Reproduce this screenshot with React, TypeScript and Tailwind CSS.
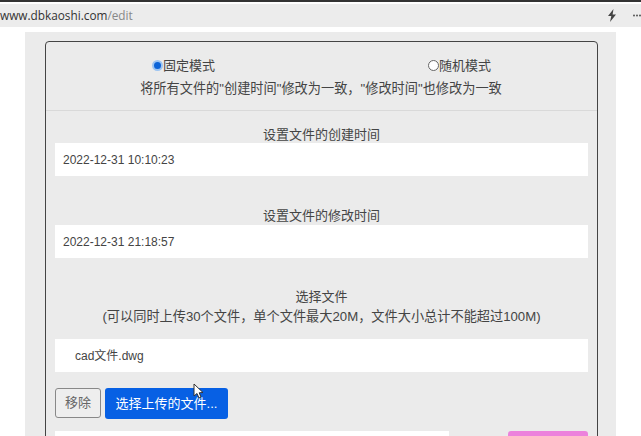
function Field({ value, indent }: { value: string; indent?: boolean }) {
  return (
    <div className={`h-[33px] bg-white flex items-center text-[12px] text-[#444] ${indent ? 'pl-[20px]' : 'pl-[8px]'}`}>
      {value}
    </div>
  );
}

function Radio({ on }: { on?: boolean }) {
  return on ? (
    <span className="w-[11px] h-[11px] rounded-full bg-[#0b63d8] border-[2px] border-[#9cc4f2] shrink-0" />
  ) : (
    <span className="w-[11px] h-[11px] rounded-full bg-white border border-[#666] shrink-0" />
  );
}

export default function App() {
  return (
    <div className="w-[641px] h-[436px] overflow-hidden bg-white font-['Liberation_Sans','Noto_Sans_CJK_SC',sans-serif] text-[#444]">
      <div className="h-[2px] bg-[#333]" />
      <div className="mt-[2px] h-[23px] bg-[#ececec] flex items-center justify-between">
        <div className="text-[11.8px] font-['Open_Sans',sans-serif]">
          <span className="text-[#333]">www.dbkaoshi.com</span>
          <span className="text-[#888]">/edit</span>
        </div>
        <div className="flex items-center gap-[16px]">
          <svg width="10" height="13" viewBox="0 0 10 13">
            <path d="M6.5 0 L1 7 L4.3 7 L3 13 L9 5.5 L5.6 5.5 Z" fill="#444" />
          </svg>
          <svg width="8" height="3" viewBox="0 0 8 3">
            <circle cx="1" cy="1.5" r="1" fill="#555" />
            <circle cx="4" cy="1.5" r="1" fill="#555" />
            <circle cx="7" cy="1.5" r="1" fill="#555" />
          </svg>
        </div>
      </div>

      <div className="mt-[5px] ml-[25px] w-[591px] h-[404px] bg-[#ebebeb] pt-[9px] pl-[20px]">
        <div className="w-[553px] h-[420px] border border-[#444] rounded-[4px]">
          <div className="h-[69px] border-b border-[#d9d9d9] text-[13px]">
            <div className="flex pt-[15px] h-[32px]">
              <div className="ml-[106px] flex items-center">
                <Radio on />
                <span>固定模式</span>
              </div>
              <div className="ml-[213px] flex items-center">
                <Radio />
                <span>随机模式</span>
              </div>
            </div>
            <p className="text-center mt-[7px] leading-[16px] text-[13.2px] pr-[1px]">将所有文件的"创建时间"修改为一致，"修改时间"也修改为一致</p>
          </div>

          <div className="px-[9px] text-[13px]">
            <p className="text-center leading-[16px] mt-[16px]">设置文件的创建时间</p>
            <Field value="2022-12-31 10:10:23" />
            <p className="text-center leading-[16px] mt-[32px] mb-[1px]">设置文件的修改时间</p>
            <Field value="2022-12-31 21:18:57" />
            <p className="text-center leading-[20px] mt-[29px]">选择文件</p>
            <p className="text-center leading-[20px] mb-[12px] text-[13.2px]">(可以同时上传30个文件，单个文件最大20M，文件大小总计不能超过100M)</p>
            <Field value="cad文件.dwg" indent />
            <div className="flex gap-[4px] mt-[16px]">
              <button className="w-[46px] h-[30px] rounded-[3px] border border-[#888] bg-[#eee] text-[13px] text-[#666]">移除</button>
              <button className="relative w-[123px] h-[31px] rounded-[3px] bg-[#0760e4] text-[13px] text-white">
                选择上传的文件...
                <svg className="absolute left-[88px] -top-[5px]" width="12" height="17" viewBox="0 0 12 17">
                  <path d="M1 1 L1 13 L4 10.5 L6 15 L8 14 L6.2 9.8 L10 9.5 Z" fill="#fff" stroke="#333" strokeWidth="1" />
                </svg>
              </button>
            </div>
            <div className="flex mt-[12px]">
              <div className="w-[396px] h-[12px] bg-white" />
              <div className="ml-[59px] w-[80px] h-[12px] bg-[#ec82dc] rounded-t-[3px]" />
            </div>
          </div>
        </div>
      </div>
    </div>
  );
}
